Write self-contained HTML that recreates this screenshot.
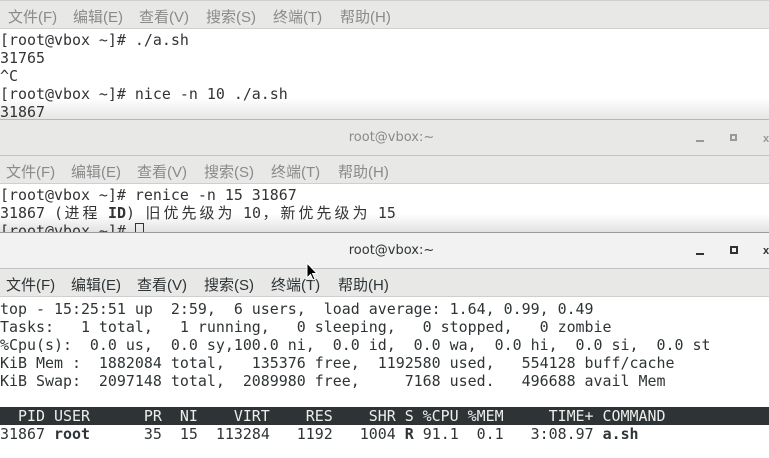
<!DOCTYPE html>
<html><head><meta charset="utf-8"><style>
*{margin:0;padding:0;box-sizing:border-box}
body{width:769px;height:458px;overflow:hidden;background:#fff;position:relative;font-family:"DejaVu Sans Mono","Noto Sans CJK SC",monospace}
.abs{position:absolute}
.menu{position:absolute;left:0;width:769px;height:28px;background:#e8e8e7;border-bottom:1px solid #cfcfcd;font-family:"Liberation Sans","Noto Sans CJK SC",sans-serif;font-size:15px;color:#8a8a8a}
.menu span{position:absolute;top:5px}
.title{position:absolute;left:0;width:769px;height:37px;background:#e8e8e7;border-top:1px solid #b8b8b6;border-bottom:1px solid #c4c4c2;font-family:"DejaVu Sans","Liberation Sans",sans-serif;font-size:13px;color:#8a8a8a;text-align:center;line-height:35px;padding-left:14px}
.term{position:absolute;left:0;font-size:14.95px;line-height:18px;white-space:pre;color:#2e3436}
.c{display:inline-block;width:18px;text-align:center}
</style></head><body>
<div class="abs" style="left:0;top:0;width:769px;height:1px;background:#cfcfcd"></div>
<div class="menu" style="top:1px;height:28px">
<span style="left:8px">文件(F)</span><span style="left:73px">编辑(E)</span><span style="left:139px">查看(V)</span><span style="left:206px">搜索(S)</span><span style="left:273px">终端(T)</span><span style="left:340px">帮助(H)</span></div>
<div class="abs" style="left:0;top:98px;width:769px;height:21px;background:linear-gradient(#fff,#e6e6e6)"></div>
<div class="term" style="top:31px;color:#333">[root@vbox ~]# ./a.sh
31765
^C
[root@vbox ~]# nice -n 10 ./a.sh
31867</div>
<div class="title" style="top:119px">root@vbox:~</div>
<div class="abs" style="left:696px;top:140px;width:8px;height:2px;background:#999"></div>
<div class="abs" style="left:730px;top:134px;width:7px;height:7px;border:2px solid #999"></div>
<div class="abs" style="left:763px;top:133px;font:bold 11px sans-serif;color:#999">x</div>
<div class="menu" style="top:156px">
<span style="left:6px">文件(F)</span><span style="left:71px">编辑(E)</span><span style="left:137px">查看(V)</span><span style="left:204px">搜索(S)</span><span style="left:271px">终端(T)</span><span style="left:338px">帮助(H)</span></div>
<div class="abs" style="left:0;top:214px;width:769px;height:18px;background:linear-gradient(#fff,#e2e2e2)"></div>
<div class="term" style="top:186px;color:#333">[root@vbox ~]# renice -n 15 31867
31867 (<span class="c">进</span><span class="c">程</span> <b>ID</b>) <span class="c">旧</span><span class="c">优</span><span class="c">先</span><span class="c">级</span><span class="c">为</span> 10<span class="c">，</span><span class="c">新</span><span class="c">优</span><span class="c">先</span><span class="c">级</span><span class="c">为</span> 15
[root@vbox ~]# <span style="display:inline-block;width:9px;height:15px;border:1px solid #333;vertical-align:-2px"></span></div>
<div class="title" style="top:232px;background:#f2f2f2;color:#2e3436;border-top:1px solid #9a9a98">root@vbox:~</div>
<div class="abs" style="left:696px;top:253px;width:8px;height:2px;background:#2e3436"></div>
<div class="abs" style="left:730px;top:246px;width:8px;height:8px;border:2px solid #2e3436"></div>
<div class="abs" style="left:763px;top:245px;font:bold 11px sans-serif;color:#2e3436">x</div>
<div class="menu" style="top:269px;color:#2e3436">
<span style="left:6px">文件(F)</span><span style="left:71px">编辑(E)</span><span style="left:137px">查看(V)</span><span style="left:204px">搜索(S)</span><span style="left:271px">终端(T)</span><span style="left:338px">帮助(H)</span></div>
<div class="term" style="top:300px">top - 15:25:51 up  2:59,  6 users,  load average: 1.64, 0.99, 0.49
Tasks:   1 total,   1 running,   0 sleeping,   0 stopped,   0 zombie
%Cpu(s):  0.0 us,  0.0 sy,100.0 ni,  0.0 id,  0.0 wa,  0.0 hi,  0.0 si,  0.0 st
KiB Mem :  1882084 total,   135376 free,  1192580 used,   554128 buff/cache
KiB Swap:  2097148 total,  2089980 free,     7168 used.   496688 avail Mem</div>
<div class="abs" style="left:0;top:407px;width:769px;height:18px;background:#2e3436"></div>
<div class="term" style="top:407px;color:#eeeeec">  PID USER      PR  NI    VIRT    RES    SHR S %CPU %MEM     TIME+ COMMAND</div>
<div class="term" style="top:425px">31867 <b>root</b>      35  15  113284   1192   1004 <b>R</b> 91.1  0.1   3:08.97 <b>a.sh</b></div>
<svg class="abs" style="left:306px;top:262px" width="12" height="20" viewBox="0 0 12 20"><path d="M1 1 L1 16 L4.5 12.5 L7 18 L9 17 L6.5 11.5 L11 11.5 Z" fill="#000" stroke="#fff" stroke-width="1"/></svg>
</body></html>
